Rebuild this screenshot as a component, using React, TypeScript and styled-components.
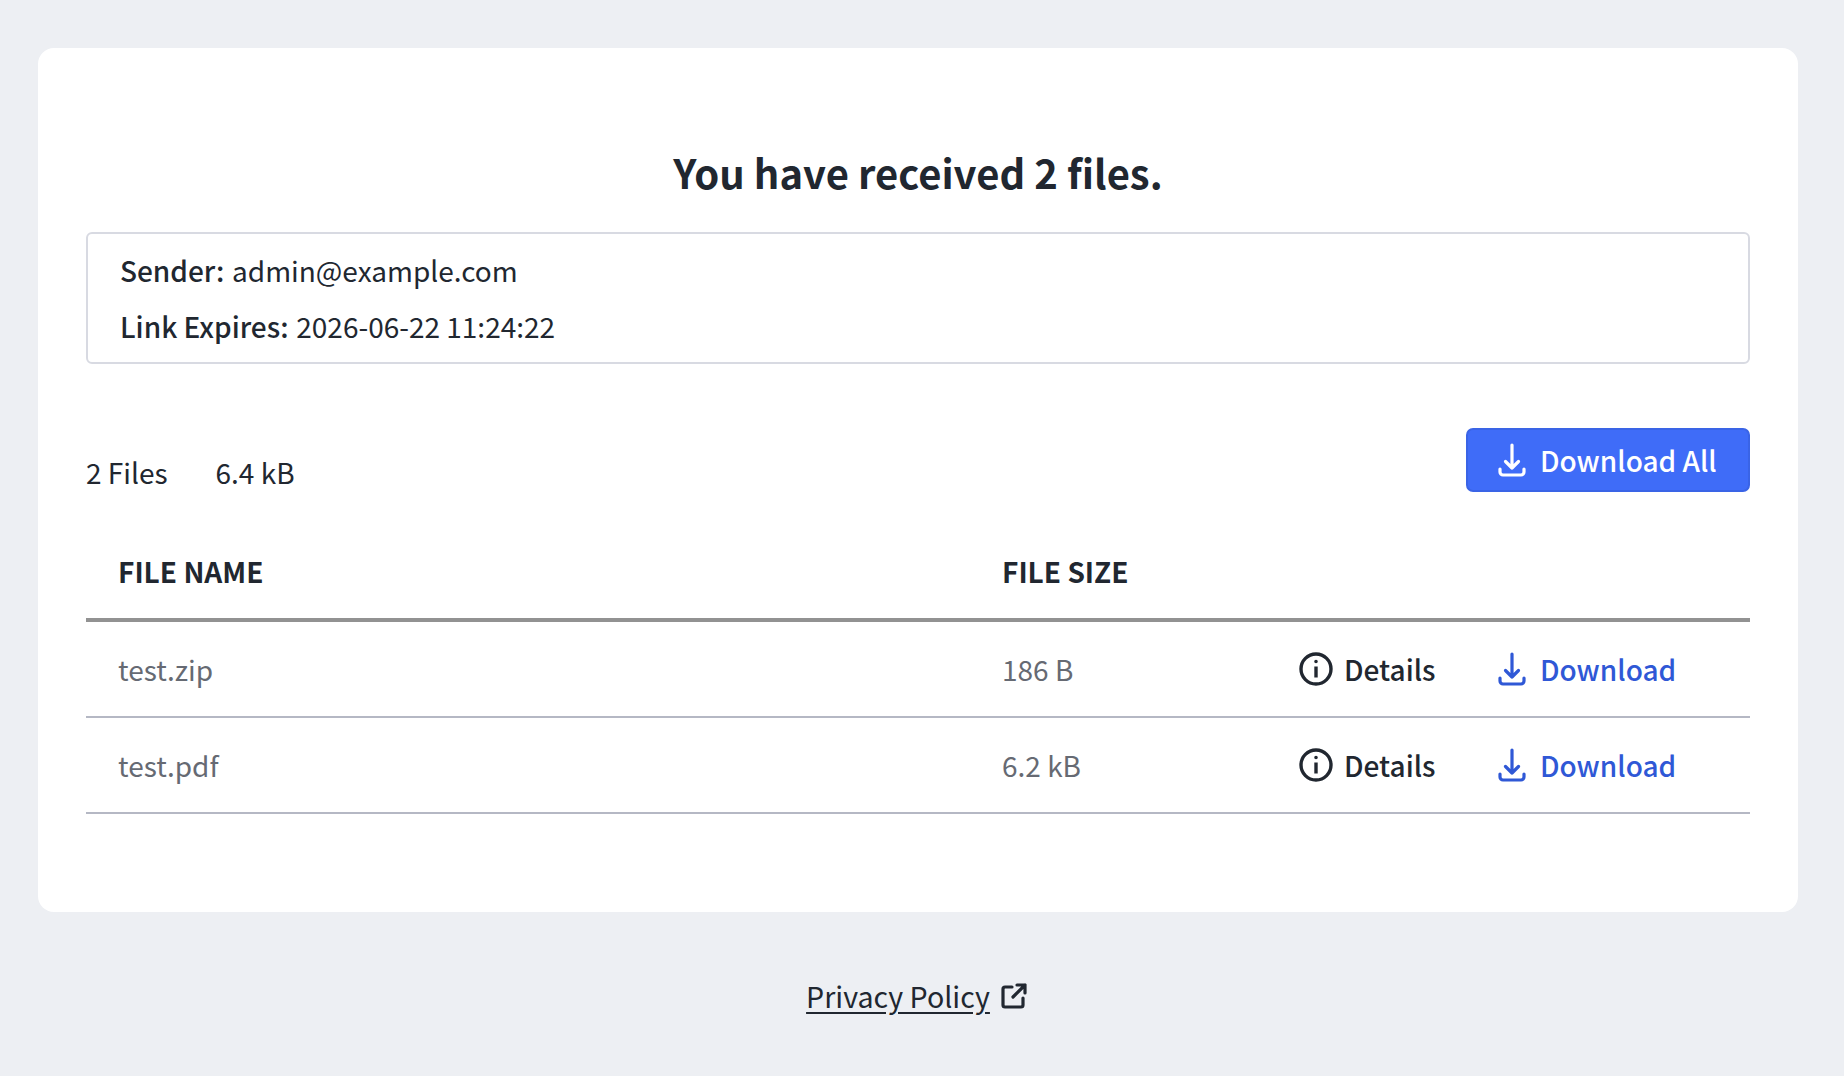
import styled, { createGlobalStyle } from 'styled-components'

const GlobalStyle = createGlobalStyle`
  html, body {
    margin: 0;
    padding: 0;
    background: #edeff3;
  }
  body {
    font-family: "Noto Sans CJK JP", "Open Sans", sans-serif;
    color: #212730;
  }
`

const Page = styled.div`
  box-sizing: border-box;
  height: 1076px;
  overflow: hidden;
  padding: 48px 46px 0 38px;
`

const Card = styled.main`
  box-sizing: border-box;
  height: 864px;
  padding: 98px 48px 0;
  background: #fff;
  border-radius: 16px;
`

const Title = styled.h1`
  margin: 0 0 34px;
  font-size: 40px;
  line-height: 52px;
  font-weight: 700;
  text-align: center;
`

const InfoBox = styled.section`
  box-sizing: border-box;
  height: 132px;
  padding: 8px 32px;
  border: 2px solid #d8dae2;
  border-radius: 6px;
`

const InfoLine = styled.div`
  font-size: 28px;
  line-height: 56px;
  b {
    font-weight: 500;
    margin-right: 1.5px;
  }
`

const Summary = styled.div`
  display: flex;
  align-items: flex-start;
  justify-content: space-between;
  margin-top: 64px;
`

const Counts = styled.div`
  display: flex;
  gap: 48px;
  margin-top: 24px;
  font-size: 28px;
  line-height: 40px;
`

const PrimaryButton = styled.button`
  box-sizing: border-box;
  display: flex;
  align-items: center;
  gap: 14px;
  width: 284px;
  height: 64px;
  padding: 0 0 1px 30px;
  background: #3f6cf8;
  border: 2px solid #3a64e6;
  border-radius: 7px;
  color: #fff;
  font-family: inherit;
  font-size: 28px;
  font-weight: 500;
`

const Table = styled.div`
  margin-top: 32px;
`

const Row = styled.div<{ $head?: boolean }>`
  box-sizing: border-box;
  display: grid;
  grid-template-columns: 884px 297px 199px 1fr;
  align-items: center;
  height: ${p => (p.$head ? '98px' : '96px')};
  padding: ${p => (p.$head ? '0 0 0 32px' : '0 0 1px 32px')};
  border-bottom: ${p => (p.$head ? '4px solid #929292' : '2px solid #b5b8c4')};
  font-size: 28px;
  line-height: 40px;
  font-weight: ${p => (p.$head ? 700 : 400)};
  color: ${p => (p.$head ? '#212730' : '#666a73')};
`

const RowAction = styled.a<{ $blue?: boolean }>`
  display: flex;
  align-items: center;
  gap: ${p => (p.$blue ? '14px' : '11px')};
  font-weight: 500;
  color: ${p => (p.$blue ? '#2f58d6' : '#212730')};
`

const Footer = styled.footer`
  display: flex;
  justify-content: center;
  align-items: center;
  gap: 11px;
  margin-top: 64px;
  padding-right: 3px;
  font-size: 28.6px;
  line-height: 40px;
`

const FooterLink = styled.a`
  text-decoration: underline;
  text-underline-offset: 4px;
  color: #212730;
`

function DownloadIcon() {
  return (
    <svg width="28" height="34" viewBox="0 0 28 34" fill="none" stroke="currentColor" strokeWidth="3.2" strokeLinecap="round" strokeLinejoin="round">
      <path d="M14 2v23M7.5 18.5l6.5 6.5 6.5-6.5" />
      <path d="M2 26v3a3 3 0 0 0 3 3h18a3 3 0 0 0 3-3v-3" />
    </svg>
  )
}

function InfoIcon() {
  return (
    <svg width="34" height="34" viewBox="0 0 34 34" fill="none" stroke="currentColor" strokeWidth="3.4">
      <circle cx="17" cy="17" r="15" />
      <path d="M17 14.5v11" />
      <circle cx="17" cy="9.5" r="1" fill="currentColor" strokeWidth="1.6" />
    </svg>
  )
}

function ExternalIcon() {
  return (
    <svg width="26" height="26" viewBox="0 0 26 26" fill="none" stroke="currentColor" strokeWidth="3.2" strokeLinecap="round" strokeLinejoin="round">
      <path d="M11 4H4a2 2 0 0 0-2 2v16a2 2 0 0 0 2 2h16a2 2 0 0 0 2-2v-7" />
      <path d="M12 14L24 2M16 2h8v8" />
    </svg>
  )
}

const files = [
  { name: 'test.zip', size: '186 B' },
  { name: 'test.pdf', size: '6.2 kB' },
]

export default function App() {
  return (
    <Page>
      <GlobalStyle />
      <Card>
        <Title>You have received 2 files.</Title>
        <InfoBox>
          <InfoLine><b>Sender:</b> admin@example.com</InfoLine>
          <InfoLine><b>Link Expires:</b> 2026-06-22 11:24:22</InfoLine>
        </InfoBox>
        <Summary>
          <Counts>
            <span>2 Files</span>
            <span>6.4 kB</span>
          </Counts>
          <PrimaryButton><DownloadIcon />Download All</PrimaryButton>
        </Summary>
        <Table>
          <Row $head>
            <span>FILE NAME</span>
            <span>FILE SIZE</span>
          </Row>
          {files.map(f => (
            <Row key={f.name}>
              <span>{f.name}</span>
              <span>{f.size}</span>
              <RowAction><InfoIcon />Details</RowAction>
              <RowAction $blue><DownloadIcon />Download</RowAction>
            </Row>
          ))}
        </Table>
      </Card>
      <Footer>
        <FooterLink>Privacy Policy</FooterLink>
        <ExternalIcon />
      </Footer>
    </Page>
  )
}
